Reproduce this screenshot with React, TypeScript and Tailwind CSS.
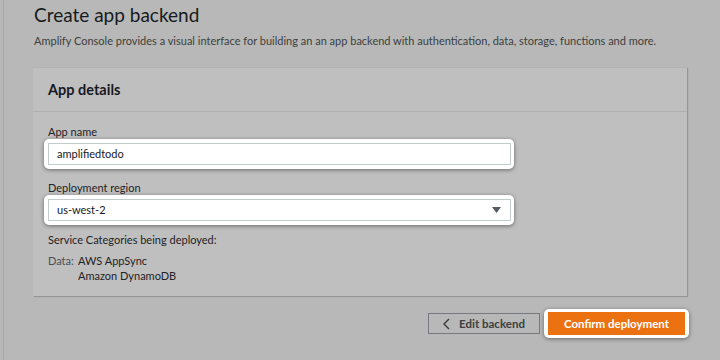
const font = "font-['Lato','Open_Sans',sans-serif]";

const spotlightClass =
  "-ml-[4px] w-[470px] rounded-[5px] bg-white p-[4px] pr-[3px] shadow-[0_1px_4px_rgba(0,0,0,0.45)]";

const fieldClass =
  "flex h-[22px] items-center border border-[#c3cbcc] text-[11px] text-[#16191f]";

const labelClass = "block text-[11px] leading-[14px] text-[#1f2226]";

export default function App() {
  return (
    <div className={`h-[360px] w-[720px] overflow-hidden bg-[#b7b8b7] pl-[3px] ${font}`}>
      <div className="h-full border-l border-[#a6a7a6] pl-[29px] pr-[33px]">
        <h1 className="pl-[1px] pt-[1px] text-[19px] leading-[28px] text-[#171a1d]">
          Create app backend
        </h1>
        <p className="mt-[4px] whitespace-nowrap pl-[1px] text-[11px] leading-[16px] text-[#3d3f41]">
          Amplify Console provides a visual interface for building an an app backend
          with authentication, data, storage, functions and more.
        </p>

        <section className="mt-[18px] border-t border-[#b2b3b2] bg-[#bfbfbf] shadow-[1px_1px_1px_rgba(0,0,0,0.18)]">
          <header className="flex h-[44px] items-center border-b border-[#b0b1b0] px-[15px]">
            <h2 className="text-[14.5px] font-bold text-[#16191f]">App details</h2>
          </header>

          <div className="px-[15px] pb-[13px] pt-[13px]">
            <label className={labelClass}>App name</label>
            <div className={spotlightClass}>
              <div className={`${fieldClass} px-[8px]`}>amplifiedtodo</div>
            </div>

            <label className={`mt-[12px] ${labelClass}`}>Deployment region</label>
            <div className={spotlightClass}>
              <div className={`${fieldClass} justify-between pl-[8px] pr-[9px]`}>
                <span>us-west-2</span>
                <svg width="9" height="6" viewBox="0 0 9 6">
                  <path d="M0 0 H9 L4.5 6 Z" fill="#545b64" />
                </svg>
              </div>
            </div>

            <p className="mt-[8px] text-[11px] leading-[14px] text-[#1f2226]">
              Service Categories being deployed:
            </p>
            <div className="mt-[6px] flex text-[11px] leading-[15px]">
              <span className="w-[30px] text-[#4a4e53]">Data:</span>
              <div className="text-[#1f2226]">
                <div>AWS AppSync</div>
                <div>Amazon DynamoDB</div>
              </div>
            </div>
          </div>
        </section>

        <div className="-mr-[2px] mt-[13px] flex items-center justify-end gap-[4px]">
          <button
            type="button"
            className="flex h-[21px] w-[112px] items-center justify-center gap-[9px] border border-[#76797d] text-[11.5px] font-bold text-[#3c3f43]"
          >
            <svg width="7" height="12" viewBox="0 0 7 12">
              <path d="M6 1 L1 6 L6 11" fill="none" stroke="#3c3f43" strokeWidth="1.5" />
            </svg>
            Edit backend
          </button>
          <div className="rounded-[5px] bg-white px-[4px] pb-[3px] pt-[3px] shadow-[0_1px_4px_rgba(0,0,0,0.45)]">
            <button
              type="button"
              className="flex h-[23px] w-[137px] items-center justify-center bg-[#ec7211] text-[11.5px] font-bold text-white"
            >
              Confirm deployment
            </button>
          </div>
        </div>
      </div>
    </div>
  );
}
